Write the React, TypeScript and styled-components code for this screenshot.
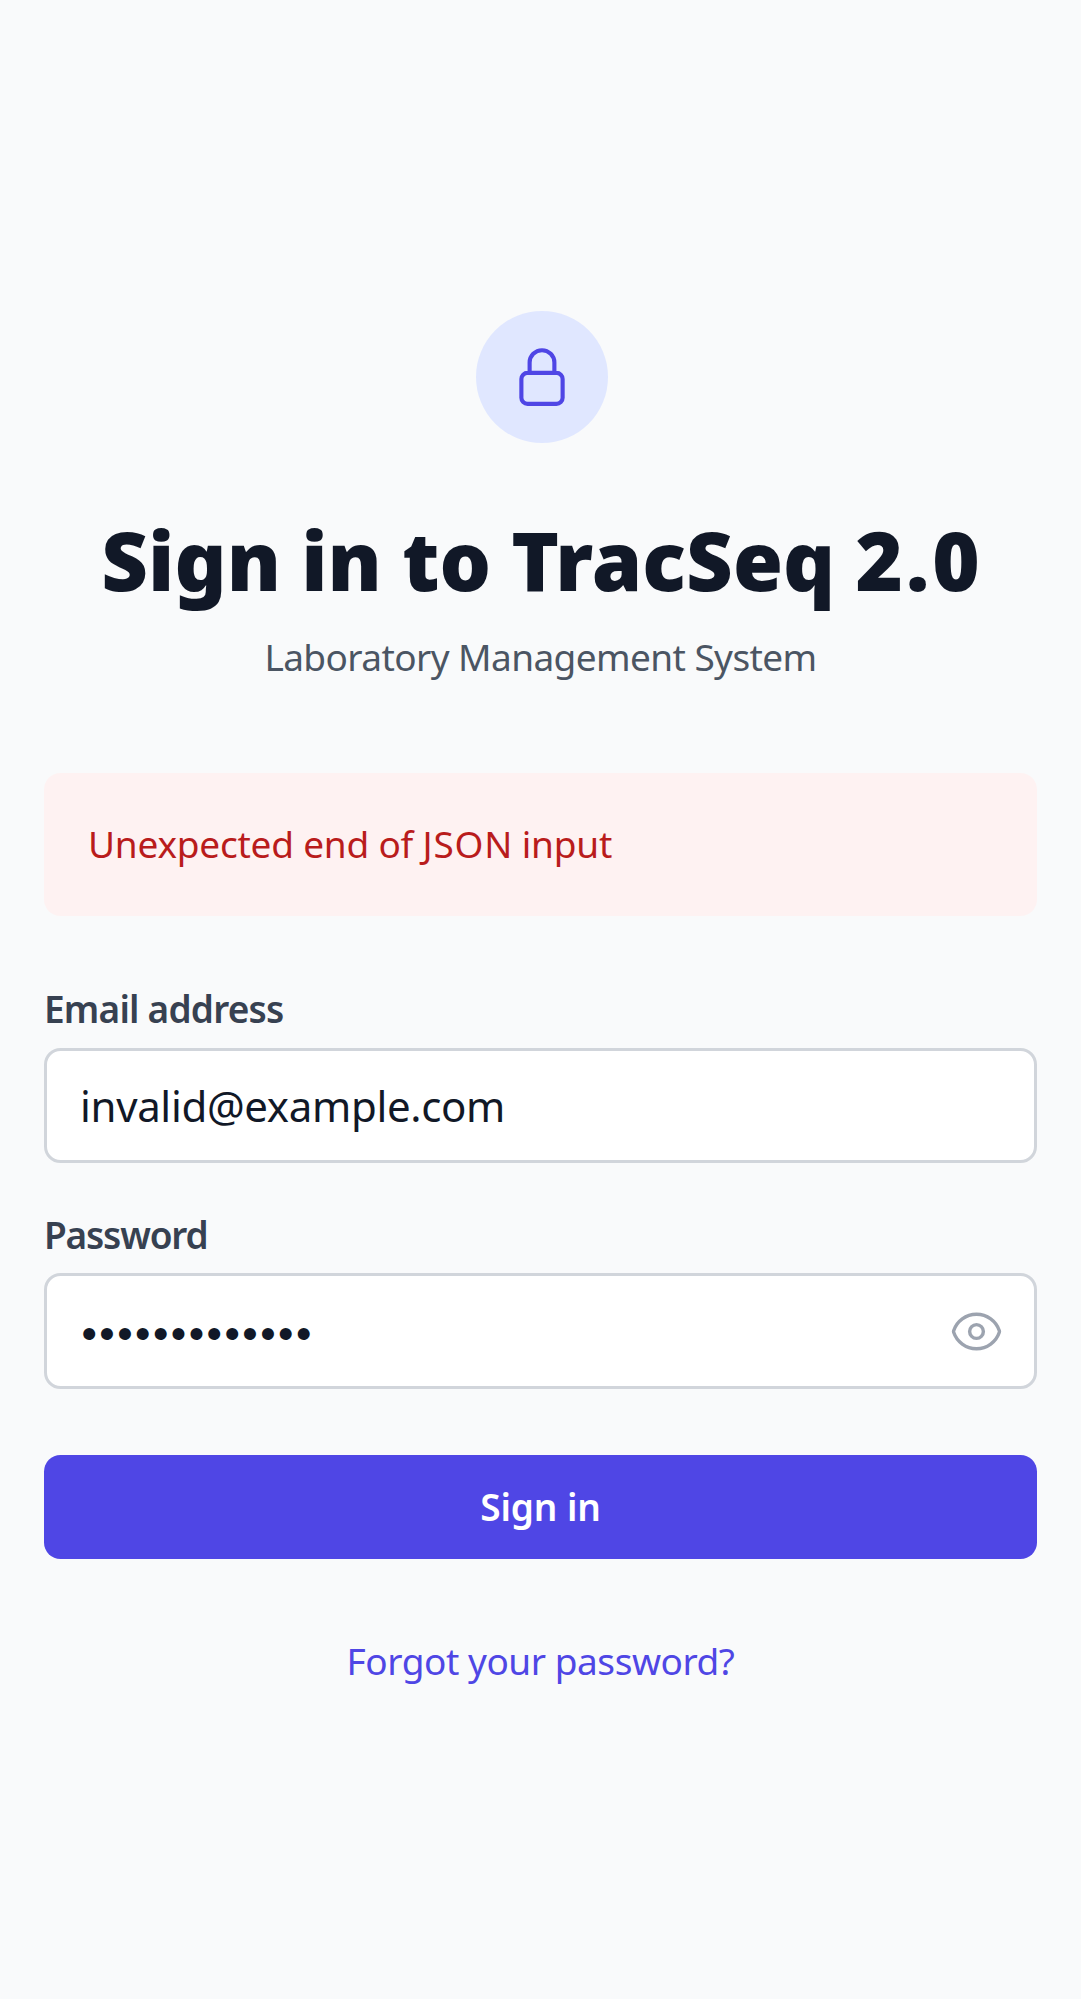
import React, { useState } from "react";
import styled, { createGlobalStyle } from "styled-components";

const GlobalStyle = createGlobalStyle`
  *, *::before, *::after { box-sizing: border-box; }
  body {
    margin: 0;
    background: #f9fafb;
    font-family: "Noto Sans", "Open Sans", sans-serif;
  }
`;

const Page = styled.main`
  min-height: 1999px;
  padding: 310.75px 44px 0;
  background: #f9fafb;
`;

const Header = styled.header`
  display: flex;
  flex-direction: column;
  align-items: center;
`;

const LockBadge = styled.div`
  display: flex;
  align-items: center;
  justify-content: center;
  width: 132px;
  height: 132px;
  margin-left: 3px;
  border-radius: 50%;
  background: #e0e7ff;
  color: #4f46e5;
`;

const Icon = styled.svg<{ $size: number }>`
  display: block;
  width: ${(p) => p.$size}px;
  height: ${(p) => p.$size}px;
  fill: none;
  stroke: currentColor;
  stroke-width: 1.5;
  stroke-linecap: round;
  stroke-linejoin: round;
`;

const Title = styled.h2`
  margin: 66px 0 0;
  font-size: 81px;
  line-height: 101px;
  font-weight: 900;
  letter-spacing: 0.1px;
  word-spacing: -1px;
  white-space: nowrap;
  color: #111827;
`;

const Tracked = styled.span<{ $tracking: number }>`
  letter-spacing: ${(p) => p.$tracking}px;
  margin-right: ${(p) => -p.$tracking}px;
`;

const Subtitle = styled.p`
  margin: 19px 0 0;
  font-size: 37px;
  line-height: 55px;
  letter-spacing: -0.59px;
  color: #4b5563;
`;

const Form = styled.form`
  display: flex;
  flex-direction: column;
  margin-top: 89px;
`;

const Alert = styled.div`
  padding: 43px 44px 45px;
  margin-bottom: 65px;
  border-radius: 16.5px;
  background: #fef2f2;
  color: #b91c1c;
  font-size: 37px;
  line-height: 55px;
  letter-spacing: -0.22px;
`;

const Fields = styled.div`
  display: flex;
  flex-direction: column;
  gap: 44px;
`;

const Field = styled.div`
  display: flex;
  flex-direction: column;
`;

const Label = styled.label<{ $tracking: number; $gap: number }>`
  margin-bottom: ${(p) => p.$gap}px;
  font-size: 37px;
  line-height: 55px;
  font-weight: 600;
  letter-spacing: ${(p) => p.$tracking}px;
  color: #374151;
`;

const Control = styled.div`
  display: flex;
  align-items: center;
  height: 115.5px;
  padding: 0 30px 0 33px;
  border: 3px solid #d1d5db;
  border-radius: 16.5px;
  background: #fff;
`;

const Input = styled.input`
  flex: 1;
  min-width: 0;
  height: 66px;
  padding: 0;
  border: 0;
  outline: 0;
  background: transparent;
  font-family: inherit;
  font-size: 42px;
  letter-spacing: -0.33px;
  color: #111827;
`;

const PasswordInput = styled(Input)`
  padding: 5px 0 0 1.5px;
  font-family: "Liberation Sans", sans-serif;
  font-size: 44px;
  letter-spacing: 2.47px;
`;

const RevealButton = styled.button`
  padding: 0;
  border: 0;
  background: transparent;
  color: #9ca3af;
`;

const Submit = styled.button`
  height: 104.5px;
  margin-top: 66px;
  padding: 0 0 2px;
  border: 0;
  border-radius: 16.5px;
  background: #4f46e5;
  color: #fff;
  font-family: inherit;
  font-size: 37px;
  line-height: 55px;
  font-weight: 600;
  letter-spacing: -0.08px;
`;

const Footer = styled.div`
  display: flex;
  justify-content: center;
  margin-top: 68.5px;
`;

const ForgotLink = styled.a`
  font-size: 37px;
  line-height: 66px;
  letter-spacing: -0.45px;
  color: #4f46e5;
  text-decoration: none;
`;

export default function App() {
  const [email, setEmail] = useState("invalid@example.com");
  const [password, setPassword] = useState("wrongpassword");
  const [visible, setVisible] = useState(false);

  return (
    <Page>
      <GlobalStyle />
      <Header>
        <LockBadge>
          <Icon $size={66} viewBox="0 0 24 24" aria-hidden="true">
            <path d="M16.5 10.5V6.75a4.5 4.5 0 10-9 0v3.75m-.75 11.25h10.5a2.25 2.25 0 002.25-2.25v-6.75a2.25 2.25 0 00-2.25-2.25H6.75a2.25 2.25 0 00-2.25 2.25v6.75a2.25 2.25 0 002.25 2.25z" />
          </Icon>
        </LockBadge>
        <Title>
          Sign in to TracSeq <Tracked $tracking={3}>2.0</Tracked>
        </Title>
        <Subtitle>Laboratory Management System</Subtitle>
      </Header>
      <Form onSubmit={(e) => e.preventDefault()}>
        <Alert role="alert">
          Unexpected end of <Tracked $tracking={0.8}>JSON</Tracked> input
        </Alert>
        <Fields>
          <Field>
            <Label htmlFor="email" $tracking={-0.8} $gap={12}>Email address</Label>
            <Control>
              <Input
                id="email"
                type="email"
                value={email}
                onChange={(e) => setEmail(e.target.value)}
              />
            </Control>
          </Field>
          <Field>
            <Label htmlFor="password" $tracking={-1.18} $gap={11}>Password</Label>
            <Control>
              <PasswordInput
                id="password"
                type={visible ? "text" : "password"}
                value={password}
                onChange={(e) => setPassword(e.target.value)}
              />
              <RevealButton type="button" aria-label="Show password" onClick={() => setVisible(!visible)}>
                <Icon $size={55} viewBox="0 0 24 24" aria-hidden="true">
                  <path d="M2.036 12.322a1.012 1.012 0 010-.639C3.423 7.51 7.36 4.5 12 4.5c4.638 0 8.573 3.007 9.963 7.178.07.207.07.431 0 .639C20.577 16.49 16.64 19.5 12 19.5c-4.638 0-8.573-3.007-9.963-7.178z" />
                  <path d="M15 12a3 3 0 11-6 0 3 3 0 016 0z" />
                </Icon>
              </RevealButton>
            </Control>
          </Field>
        </Fields>
        <Submit type="submit">Sign in</Submit>
        <Footer>
          <ForgotLink href="#">Forgot your password?</ForgotLink>
        </Footer>
      </Form>
    </Page>
  );
}
